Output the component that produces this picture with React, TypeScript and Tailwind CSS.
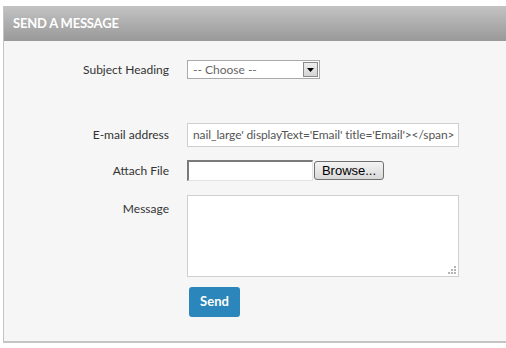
import React from "react";

const font = { fontFamily: "Lato, 'Open Sans', sans-serif" };

function Label({ children, top }: { children: React.ReactNode; top?: boolean }) {
  return (
    <div
      className={`w-[165px] shrink-0 text-right text-[12px] leading-4 text-[#333] ${top ? "pt-[6px]" : ""}`}
    >
      {children}
    </div>
  );
}

export default function App() {
  return (
    <div className="h-[348px] w-[506px] overflow-hidden bg-white pl-[3px] pt-[6px]" style={font}>
      <div className="w-[520px] border-b-2 border-l border-[#c4c4c4] bg-[#f6f6f6]">
        {/* header */}
        <div className="flex h-[35px] items-center bg-gradient-to-b from-[#c3c3c3] to-[#999] pl-[9px]">
          <span className="text-[13px] font-bold tracking-[-0.2px] text-white">SEND A MESSAGE</span>
        </div>

        <div className="pb-[24px] pt-[19px]">
          {/* subject */}
          <div className="flex h-[19px] items-center gap-[18px]">
            <Label>Subject Heading</Label>
            <div className="flex h-[19px] w-[133px] items-center border border-[#a9a9a9] bg-white pl-[5px] pr-[1px]">
              <span className="flex-1 text-[12px] text-[#666]">-- Choose --</span>
              <span className="flex h-[15px] w-[15px] items-center justify-center border border-[#8a8a8a] bg-gradient-to-b from-[#eee] to-[#d4d4d4]">
                <svg width="7" height="4" viewBox="0 0 7 4">
                  <path d="M0 0h7L3.5 4z" fill="#000" />
                </svg>
              </span>
            </div>
          </div>

          {/* email */}
          <div className="mt-[44px] flex h-[24px] items-center gap-[18px]">
            <Label>E-mail address</Label>
            <div className="flex h-[24px] w-[272px] items-center overflow-hidden whitespace-nowrap border border-[#cfcfcf] bg-white pl-[5px] text-[12px] tracking-[-0.1px] text-[#555]">
              nail_large' displayText='Email' title='Email'&gt;&lt;/span&gt;
            </div>
          </div>

          {/* attach */}
          <div className="mt-[13px] flex h-[21px] items-center gap-[18px]">
            <Label>Attach File</Label>
            <div className="flex items-center">
              <div className="h-[21px] w-[126px] border-b border-l-2 border-r border-t-2 border-b-[#e4e4e4] border-l-[#7a7a7a] border-r-[#e4e4e4] border-t-[#7a7a7a] bg-white" />
              <button
                type="button"
                className="ml-[1px] flex h-[19px] w-[70px] items-center justify-center rounded-[3px] border border-[#707070] bg-gradient-to-b from-[#f4f4f4] to-[#d8d8d8] text-[13px] text-black"
                style={{ fontFamily: "'Liberation Sans', Arial, sans-serif" }}
              >
                Browse...
              </button>
            </div>
          </div>

          {/* message */}
          <div className="mt-[14px] flex items-start gap-[18px]">
            <Label top>Message</Label>
            <div className="relative h-[82px] w-[272px] border border-[#cfcfcf] bg-white">
              <svg className="absolute bottom-[1px] right-[1px]" width="9" height="9" viewBox="0 0 9 9">
                <g fill="#b5b5b5">
                  <rect x="6" y="0" width="2" height="2" />
                  <rect x="3" y="3" width="2" height="2" />
                  <rect x="6" y="3" width="2" height="2" />
                  <rect x="0" y="6" width="2" height="2" />
                  <rect x="3" y="6" width="2" height="2" />
                  <rect x="6" y="6" width="2" height="2" />
                </g>
              </svg>
            </div>
          </div>

          {/* send */}
          <div className="mt-[10px] flex">
            <div className="w-[185px] shrink-0" />
            <button
              type="button"
              className="flex h-[30px] w-[51px] items-center justify-center rounded-[3px] bg-[#2a86bb] text-[13px] font-bold text-white"
            >
              Send
            </button>
          </div>
        </div>
      </div>
    </div>
  );
}
